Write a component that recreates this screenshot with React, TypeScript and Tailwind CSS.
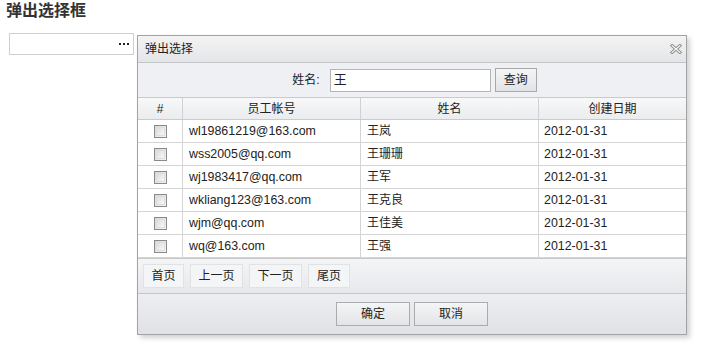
import React from "react";

const rows = [
  ["wl19861219@163.com", "王岚", "2012-01-31"],
  ["wss2005@qq.com", "王珊珊", "2012-01-31"],
  ["wj1983417@qq.com", "王军", "2012-01-31"],
  ["wkliang123@163.com", "王克良", "2012-01-31"],
  ["wjm@qq.com", "王佳美", "2012-01-31"],
  ["wq@163.com", "王强", "2012-01-31"],
];

const font = { fontFamily: '"Liberation Sans", Arial, "Noto Sans CJK SC", sans-serif' };

function CloseIcon() {
  return (
    <svg width="12" height="10" viewBox="0 0 12 10">
      <path d="M2 1.5 L10 8.5 M10 1.5 L2 8.5" stroke="#8a8a8a" strokeWidth="3" strokeLinecap="square" fill="none" />
      <path d="M2 1.5 L10 8.5 M10 1.5 L2 8.5" stroke="#fafafa" strokeWidth="1.2" strokeLinecap="square" fill="none" />
    </svg>
  );
}

function Checkbox() {
  return (
    <div className="w-[13px] h-[13px] border border-[#8a8a8a] bg-gradient-to-br from-[#d6d6d6] to-[#f5f5f5] p-[1px]">
      <div className="w-full h-full border border-[#dedede] bg-gradient-to-br from-[#dcdcdc] to-[#f8f8f8]" />
    </div>
  );
}

export default function App() {
  return (
    <div className="w-[701px] h-[345px] bg-white text-[12px] text-[#222]" style={font}>
      <div className="h-[33px] pl-[6px] pt-[1px] text-[16px] leading-[20px] font-bold text-[#333]">弹出选择框</div>
      <div className="flex items-start">
        <div className="ml-[9px] w-[125px] h-[22px] border border-[#cfcfcf] bg-white flex items-start justify-end pr-[4px] pt-[9px] gap-[2px]">
          <span className="w-[2px] h-[2px] bg-[#222]" />
          <span className="w-[2px] h-[2px] bg-[#222]" />
          <span className="w-[2px] h-[2px] bg-[#222]" />
        </div>
        <div className="ml-[3px] mt-[2px] w-[550px] h-[300px] border border-[#a3a3a3] shadow-[3px_3px_5px_rgba(0,0,0,0.18)] flex flex-col bg-white">
          {/* header */}
          <div className="h-[27px] border-b border-[#c3c5c9] bg-gradient-to-b from-[#f3f3f4] to-[#e3e5e8] flex items-center justify-between pl-[7px] pr-[4px]">
            <span className="text-[12px] text-[#222]">弹出选择</span>
            <CloseIcon />
          </div>
          {/* search */}
          <div className="h-[34px] bg-[#eef0f3] flex items-center justify-center pl-[5px]">
            <span className="mr-[10px] text-[#222]">姓名:</span>
            <div className="w-[161px] h-[23px] border border-[#b5b5b5] bg-white flex items-center pl-[3px] text-[13px]">王</div>
            <button className="ml-[4px] w-[42px] h-[24px] border border-[#a9a9a9] bg-gradient-to-b from-[#f5f5f6] to-[#e1e3e6] text-[12px] text-[#222]">查询</button>
          </div>
          {/* table header */}
          <div className="h-[23px] border-t border-b border-[#c8cacd] bg-gradient-to-b from-[#f8f8f9] to-[#eaecee] grid grid-cols-[45px_178px_178px_147px] text-[#222]">
            <div className="border-r border-[#cfd1d4] flex items-center justify-center">#</div>
            <div className="border-r border-[#cfd1d4] flex items-center justify-center">员工帐号</div>
            <div className="border-r border-[#cfd1d4] flex items-center justify-center">姓名</div>
            <div className="flex items-center justify-center">创建日期</div>
          </div>
          {/* rows */}
          {rows.map((r, i) => (
            <div key={i} className="h-[23px] border-b border-[#d4d4d4] grid grid-cols-[45px_178px_178px_147px]">
              <div className="border-r border-[#d4d4d4] flex items-center justify-center">
                <Checkbox />
              </div>
              <div className="border-r border-[#d4d4d4] flex items-center pl-[6px] text-[12.4px]">{r[0]}</div>
              <div className="border-r border-[#d4d4d4] flex items-center pl-[6px]">{r[1]}</div>
              <div className="flex items-center pl-[5px] text-[12.4px]">{r[2]}</div>
            </div>
          ))}
          {/* pager */}
          <div className="h-[36px] border-t border-b border-t-[#c8c8c8] border-b-[#c4c6c9] bg-gradient-to-b from-[#f4f5f7] to-[#e6e8eb] flex items-center pl-[5px] gap-[6px] text-[#222]">
            <button className="w-[41px] h-[24px] border border-[#e0e2e4] bg-[#f4f5f6] text-[12px]">首页</button>
            <button className="w-[53px] h-[24px] border border-[#e0e2e4] bg-[#f4f5f6] text-[12px]">上一页</button>
            <button className="w-[53px] h-[24px] border border-[#e0e2e4] bg-[#f4f5f6] text-[12px]">下一页</button>
            <button className="w-[42px] h-[24px] border border-[#e0e2e4] bg-[#f4f5f6] text-[12px]">尾页</button>
          </div>
          {/* footer */}
          <div className="flex-1 bg-gradient-to-b from-[#eceef1] to-[#e0e2e5] flex items-center justify-center gap-[4px] text-[#222]">
            <button className="w-[74px] h-[24px] border border-[#a9abad] bg-gradient-to-b from-[#f4f5f6] to-[#e2e4e7] text-[12px]">确定</button>
            <button className="w-[74px] h-[24px] border border-[#a9abad] bg-gradient-to-b from-[#f4f5f6] to-[#e2e4e7] text-[12px]">取消</button>
          </div>
        </div>
      </div>
    </div>
  );
}
